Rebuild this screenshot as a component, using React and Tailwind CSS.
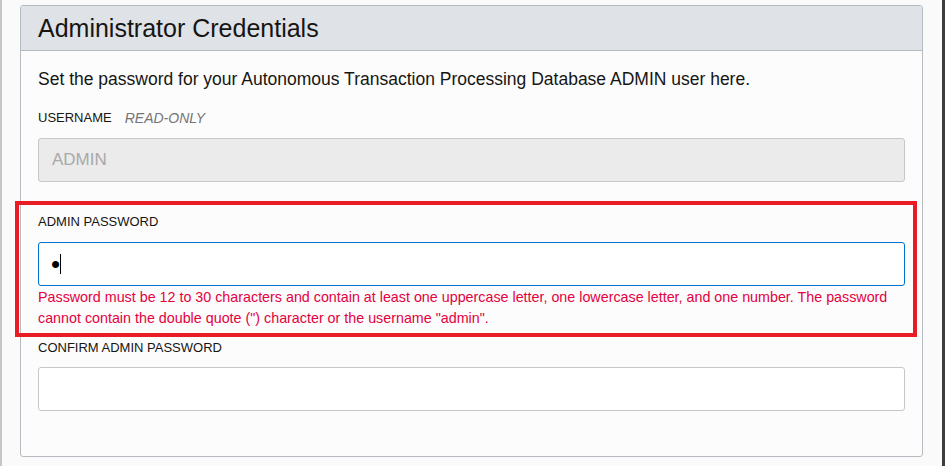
import React from 'react';

const Label = ({ children }) => (
  <div className="text-[13px] leading-[18px] text-[#161513] uppercase">{children}</div>
);

const App = () => {
  return (
    <div
      className="relative w-[945px] h-[466px] overflow-hidden bg-[#fafafa] flex"
      style={{ fontFamily: '"Liberation Sans", Arial, sans-serif' }}
    >
      {/* left frame edge */}
      <div className="w-[2px] h-full bg-[#c3c7cc]" />

      <div className="pl-[18px] pt-[5px]">
        <div className="w-[903px] h-[452px] border border-[#b6bbc1] rounded-[3px] bg-[#fcfcfc] flex flex-col">
          <div className="h-[45px] bg-[#dfe2e6] border-b border-[#b6bbc1] rounded-t-[3px] px-[17px] flex items-center">
            <h2 className="text-[25px] leading-[28px] text-[#161513]">Administrator Credentials</h2>
          </div>

          <div className="px-[17px] pt-[16px]">
            <p className="text-[17.5px] leading-[24px] text-[#161513]">
              Set the password for your Autonomous Transaction Processing Database ADMIN user here.
            </p>

            <div className="mt-[18px] flex items-center gap-[13px]">
              <Label>Username</Label>
              <span className="text-[14px] leading-[18px] italic text-[#757575]">READ-ONLY</span>
            </div>
            <div className="mt-[11px] h-[44px] border border-[#c4c8cc] rounded-[3px] bg-[#ebebeb] flex items-center px-[13px]">
              <span className="text-[17px] text-[#a9a9a9]">ADMIN</span>
            </div>

            <div className="mt-[31px]">
              <Label>Admin Password</Label>
            </div>
            <div className="mt-[11px] h-[44px] border border-[#0572ce] rounded-[3px] bg-white flex items-center px-[12px]">
              <span className="text-[26px] text-black leading-none">•</span>
              <span className="w-px h-[20px] bg-black" />
            </div>
            <p className="mt-px text-[14.3px] leading-[21px] text-[#e5003e]">
              Password must be 12 to 30 characters and contain at least one uppercase letter, one lowercase letter, and one number. The password cannot contain the double quote (") character or the username "admin".
            </p>

            <div className="mt-[10px]">
              <Label>Confirm Admin Password</Label>
            </div>
            <div className="mt-[10px] h-[44px] border border-[#c4c8cc] rounded-[3px] bg-white" />
          </div>
        </div>
      </div>

      {/* right frame edge */}
      <div className="ml-auto w-[3px] h-full bg-[#3c3c3c]" />

      {/* highlight annotation */}
      <div className="absolute left-[15px] top-[201px] w-[902px] h-[136px] border-4 border-[#e81c24] pointer-events-none" />
    </div>
  );
};

export default App;
